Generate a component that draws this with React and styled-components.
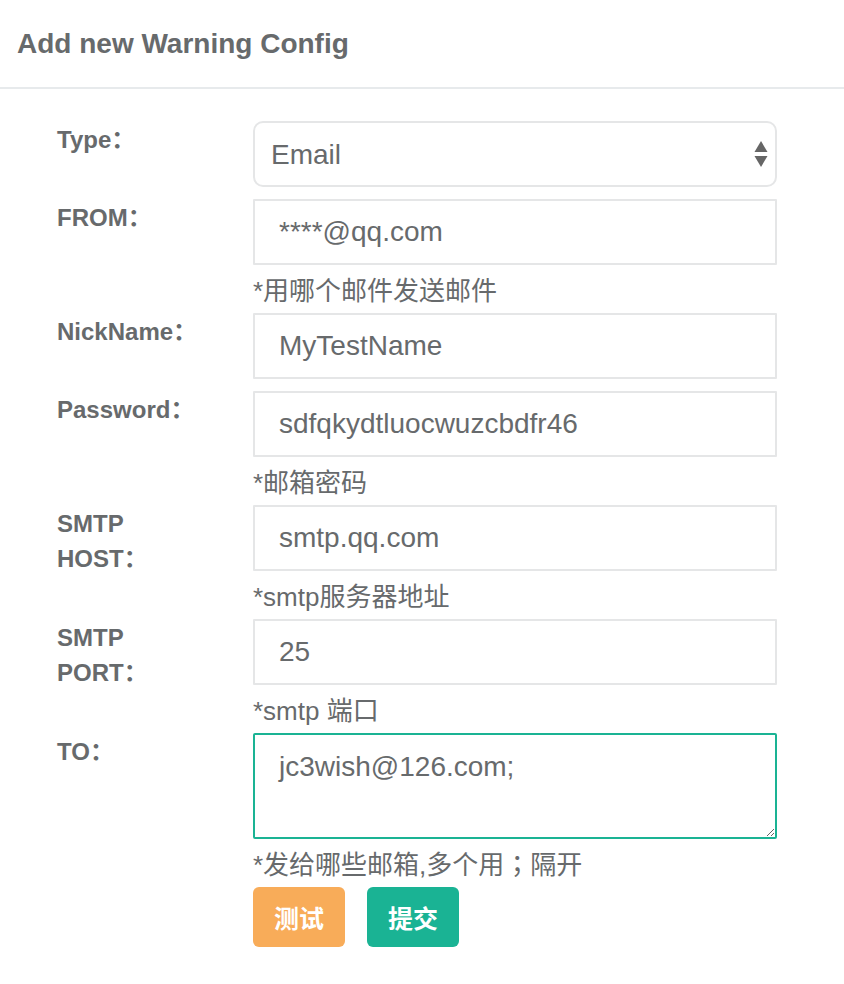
import React from "react";
import styled, { createGlobalStyle } from "styled-components";

const fields = [
  { label: "FROM：", value: "****@qq.com", hint: "*用哪个邮件发送邮件" },
  { label: "NickName：", value: "MyTestName" },
  { label: "Password：", value: "sdfqkydtluocwuzcbdfr46", hint: "*邮箱密码" },
  { label: "SMTP HOST：", value: "smtp.qq.com", hint: "*smtp服务器地址" },
  { label: "SMTP PORT：", value: "25", hint: "*smtp 端口" },
];

const App = () => {
  return (
    <Page>
      <GlobalStyle/>
      <Header>
        <Title>Add new Warning Config</Title>
      </Header>
      <Form>
        <Field>
          <Label>Type：</Label>
          <Control>
            <SelectWrap>
              <Select defaultValue="email">
                <option value="email">Email</option>
              </Select>
              <Arrows width="14" height="26" viewBox="0 0 14 26">
                <polygon points="7,0 13.5,11 0.5,11" fill="#666"/>
                <polygon points="0.5,15 13.5,15 7,26" fill="#666"/>
              </Arrows>
            </SelectWrap>
          </Control>
        </Field>
        {fields.map(f => (
          <Field key={f.label}>
            <Label>{f.label}</Label>
            <Control>
              <Input type="text" defaultValue={f.value} spellCheck={false}/>
              {f.hint && <Hint>{f.hint}</Hint>}
            </Control>
          </Field>
        ))}
        <Field>
          <Label>TO：</Label>
          <Control>
            <TextArea defaultValue="jc3wish@126.com;" spellCheck={false}/>
            <Hint>*发给哪些邮箱,多个用<Punct>；</Punct>隔开</Hint>
          </Control>
        </Field>
        <Field>
          <Label/>
          <Buttons>
            <Button color="#f8ac59">测试</Button>
            <Button color="#1ab394">提交</Button>
          </Buttons>
        </Field>
      </Form>
    </Page>
  )
};

const GlobalStyle = createGlobalStyle`
  html, body {
    margin: 0;
    padding: 0;
    background: #fff;
  }
  * {
    box-sizing: border-box;
  }
`;
const Page = styled.div`
  width: 844px;
  min-height: 984px;
  background: #fff;
  color: #676a6c;
  font-family: "Liberation Sans", "Noto Sans CJK SC", Arial, sans-serif;
`;
const Header = styled.div`
  height: 89px;
  padding: 22px 17px 0;
  border-bottom: 2px solid #e7eaec;
`;
const Title = styled.h2`
  margin: 0;
  font-size: 28px;
  line-height: 44px;
  font-weight: bold;
  color: #676a6c;
`;
const Form = styled.div`
  padding: 32px 67px 0 57px;
`;
const Field = styled.div`
  display: flex;
  margin-bottom: 12px;
`;
const Label = styled.div`
  width: 196px;
  flex-shrink: 0;
  padding: 1px 40px 0 0;
  font-size: 24px;
  line-height: 35px;
  font-weight: bold;
  color: #676a6c;
`;
const Control = styled.div`
  width: 524px;
  display: flex;
  flex-direction: column;
`;
const SelectWrap = styled.div`
  position: relative;
`;
const Select = styled.select`
  appearance: none;
  width: 100%;
  height: 66px;
  padding: 0 16px;
  border: 2px solid #e5e6e7;
  border-radius: 10px;
  background: #fff;
  font-family: "Liberation Sans", sans-serif;
  font-size: 28px;
  color: #676a6c;
  outline: none;
`;
const Arrows = styled.svg`
  position: absolute;
  right: 9px;
  top: 20px;
  pointer-events: none;
`;
const Input = styled.input`
  width: 100%;
  height: 66px;
  padding: 0 24px;
  border: 2px solid #e5e6e7;
  border-radius: 1px;
  background: #fff;
  font-family: "Liberation Sans", sans-serif;
  font-size: 28px;
  color: #676a6c;
  outline: none;
`;
const TextArea = styled.textarea`
  display: block;
  width: 100%;
  height: 106px;
  padding: 12px 24px;
  border: 2px solid #1ab394;
  border-radius: 2px;
  font-family: "Liberation Sans", sans-serif;
  font-size: 28px;
  line-height: 40px;
  color: #676a6c;
  outline: none;
  resize: both;
`;
const Hint = styled.div`
  height: 36px;
  padding-top: 16px;
  font-size: 26px;
  line-height: 20px;
  color: #676a6c;
  white-space: nowrap;
`;
const Punct = styled.span`
  font-family: "Noto Sans CJK TC", sans-serif;
  line-height: 0;
`;
const Buttons = styled.div`
  display: flex;
  gap: 22px;
`;
const Button = styled.button`
  width: 92px;
  height: 60px;
  border: none;
  border-radius: 6px;
  background: ${p => p.color};
  color: #fff;
  font-family: "Noto Sans CJK SC", sans-serif;
  font-size: 25px;
  font-weight: 700;
  padding: 0;
`;

export default App;
